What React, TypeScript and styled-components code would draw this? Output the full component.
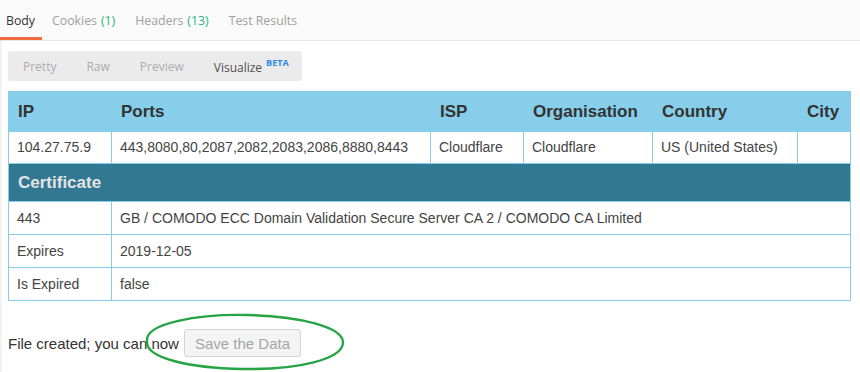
import React from 'react';
import { styled, createGlobalStyle } from 'styled-components';

const GlobalStyle = createGlobalStyle`
  html, body {
    margin: 0;
    padding: 0;
    background: #ffffff;
  }
  body {
    font-family: 'Liberation Sans', Arial, sans-serif;
    color: #333;
  }
`;

type Tab = { label: string; count?: string; active?: boolean };

const tabs: Tab[] = [
  { label: 'Body', active: true },
  { label: 'Cookies', count: '(1)' },
  { label: 'Headers', count: '(13)' },
  { label: 'Test Results' },
];

const views = [
  { label: 'Pretty' },
  { label: 'Raw' },
  { label: 'Preview' },
  { label: 'Visualize', active: true, beta: true },
];

const certRows = [
  { key: '443', value: 'GB / COMODO ECC Domain Validation Secure Server CA 2 / COMODO CA Limited' },
  { key: 'Expires', value: '2019-12-05' },
  { key: 'Is Expired', value: 'false' },
];

export default function App() {
  return (
    <Page>
      <GlobalStyle />
      <TabBar>
        {tabs.map((t) => (
          <TabItem key={t.label} $active={!!t.active}>
            {t.label}
            {t.count && <Count>{t.count}</Count>}
          </TabItem>
        ))}
      </TabBar>
      <Content>
        <Segmented>
          {views.map((v) => (
            <Segment key={v.label} $active={!!v.active}>
              {v.label}
              {v.beta && <Beta>BETA</Beta>}
            </Segment>
          ))}
        </Segmented>

        <Table>
          <colgroup>
            <col style={{ width: 103 }} />
            <col style={{ width: 319 }} />
            <col style={{ width: 93 }} />
            <col style={{ width: 129 }} />
            <col style={{ width: 145 }} />
            <col style={{ width: 53 }} />
          </colgroup>
          <tbody>
            <HeadRow>
              <HeadCell>IP</HeadCell>
              <HeadCell>Ports</HeadCell>
              <HeadCell>ISP</HeadCell>
              <HeadCell>Organisation</HeadCell>
              <HeadCell>Country</HeadCell>
              <HeadCell>City</HeadCell>
            </HeadRow>
            <DataRow $h={32}>
              <Cell>104.27.75.9</Cell>
              <Cell>443,8080,80,2087,2082,2083,2086,8880,8443</Cell>
              <Cell>Cloudflare</Cell>
              <Cell>Cloudflare</Cell>
              <Cell>US (United States)</Cell>
              <Cell />
            </DataRow>
            <SectionRow>
              <SectionCell colSpan={6}>Certificate</SectionCell>
            </SectionRow>
            {certRows.map((r) => (
              <DataRow key={r.key} $h={33}>
                <Cell>{r.key}</Cell>
                <Cell colSpan={5}>{r.value}</Cell>
              </DataRow>
            ))}
          </tbody>
        </Table>

        <SaveLine>
          <span>File created; you can now</span>
          <SaveButton disabled>Save the Data</SaveButton>
          <Circle viewBox="0 0 210 62" aria-hidden>
            <path
              d="M8 30 C 6 12, 60 3, 108 4 C 160 5, 205 16, 204 32 C 203 48, 160 59, 104 58 C 50 57, 6 47, 8 30 Z"
              fill="none"
              stroke="#26a444"
              strokeWidth="2.4"
            />
          </Circle>
        </SaveLine>
      </Content>
    </Page>
  );
}

const Page = styled.div`
  width: 860px;
  height: 372px;
  overflow: hidden;
  background: #fff;
`;

const TabBar = styled.div`
  display: flex;
  height: 40px;
  background: #fafafa;
  border-bottom: 1px solid #e6e6e6;
  font-family: 'Open Sans', 'Liberation Sans', sans-serif;
  font-size: 12.3px;
`;

const TabItem = styled.div<{ $active: boolean }>`
  display: flex;
  align-items: center;
  box-sizing: border-box;
  height: 40px;
  padding: 3px 10px 0;
  color: ${(p) => (p.$active ? '#333' : '#a0a0a0')};
  border-bottom: 3px solid ${(p) => (p.$active ? '#f26b3a' : 'transparent')};

  &:first-child {
    padding: 3px 7px 0 6px;
  }
`;

const Count = styled.span`
  margin-left: 4px;
  color: #26b47f;
`;

const Content = styled.div`
  position: relative;
  height: 331px;
  padding: 10px 0 0 6px;
  border-left: 2px solid #f2f2f2;
`;

const Segmented = styled.div`
  display: inline-flex;
  align-items: center;
  height: 30px;
  padding-right: 13px;
  background: #ebebeb;
  border-radius: 3px;
  font-family: 'Open Sans', 'Liberation Sans', sans-serif;
  font-size: 12px;
`;

const Segment = styled.div<{ $active: boolean }>`
  padding: 0 15px;
  color: ${(p) => (p.$active ? '#505050' : '#ababab')};

  &:last-child {
    padding-right: 0;
  }
`;

const Beta = styled.sup`
  margin-left: 4px;
  font-size: 9px;
  font-weight: 700;
  color: #2e8ae6;
  vertical-align: 6px;
`;

const Table = styled.table`
  margin-top: 10px;
  width: 842px;
  table-layout: fixed;
  border-collapse: collapse;
  font-family: 'Liberation Sans', Arial, sans-serif;
`;

const HeadRow = styled.tr`
  height: 40px;
  background: #87ceeb;
`;

const HeadCell = styled.td`
  padding: 0 9px;
  border: 1px solid #87ceeb;
  font-size: 17px;
  font-weight: 700;
  color: #333;
  white-space: nowrap;
`;

const DataRow = styled.tr<{ $h: number }>`
  height: ${(p) => p.$h}px;
`;

const Cell = styled.td`
  padding: 0 9px 1px 8px;
  border: 1px solid #87ceeb;
  font-size: 14px;
  color: #444;
  white-space: nowrap;
`;

const SectionRow = styled.tr`
  height: 38px;
  background: #337893;
`;

const SectionCell = styled.td`
  padding: 0 9px;
  border: 1px solid #87ceeb;
  border-top: none;
  font-size: 17px;
  font-weight: 700;
  color: #e4e4e4;
`;

const SaveLine = styled.div`
  position: relative;
  display: flex;
  align-items: center;
  gap: 5px;
  margin-top: 28px;
  height: 28px;
  font-family: 'Liberation Sans', Arial, sans-serif;
  font-size: 15px;
  color: #333;
`;

const SaveButton = styled.button`
  box-sizing: border-box;
  height: 28px;
  padding: 0 10px;
  background: #f4f4f4;
  border: 1px solid #d4d4d4;
  border-radius: 3px;
  font-family: 'Liberation Sans', Arial, sans-serif;
  font-size: 15px;
  color: #a6a6a6;
`;

const Circle = styled.svg`
  position: absolute;
  left: 131px;
  top: -18px;
  width: 210px;
  height: 62px;
  pointer-events: none;
`;
